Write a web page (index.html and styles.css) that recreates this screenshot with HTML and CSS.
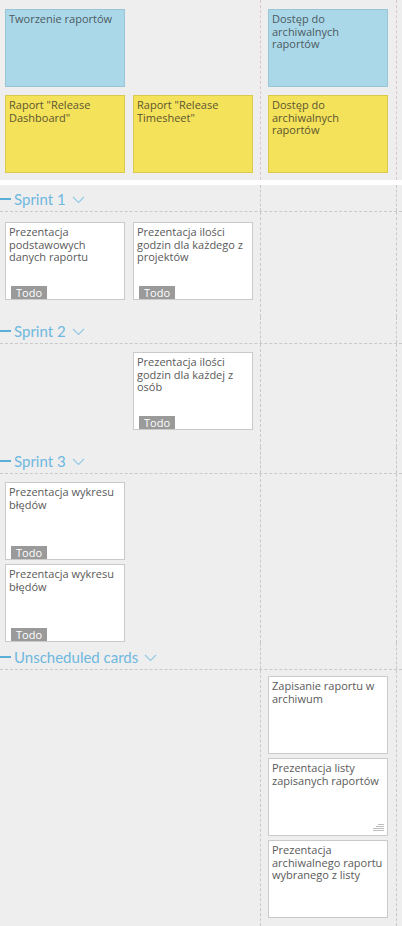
FILE: index.html
```html
<!DOCTYPE html>
<html lang="pl">

<head>
    <meta charset="UTF-8">
    <meta name="viewport" content="width=device-width, initial-scale=1.0">
    <title>Story map</title>
    <link rel="stylesheet" href="styles.css">
</head>

<body>
    <div class="board">
        <!-- activities / features -->
        <div class="lane lane-top">
            <div class="cell wide">
                <div class="cols">
                    <div class="card blue">Tworzenie raportów</div>
                    <div></div>
                    <div class="card yellow">Raport "Release Dashboard"</div>
                    <div class="card yellow">Raport "Release Timesheet"</div>
                </div>
            </div>
            <div class="cell narrow">
                <div class="stack wide-gap">
                    <div class="card blue">Dostęp do archiwalnych raportów</div>
                    <div class="card yellow">Dostęp do archiwalnych raportów</div>
                </div>
            </div>
            <div class="cell rest"></div>
        </div>

        <div class="band"></div>

        <!-- Sprint 1 -->
        <div class="lane lane-head">
            <div class="cell wide head">
                <span class="dash"></span>
                <span class="title">Sprint 1</span>
                <svg class="chev" width="13" height="8" viewBox="0 0 13 8"><polyline points="1,1 6.5,6.5 12,1" /></svg>
            </div>
            <div class="cell narrow"></div>
            <div class="cell rest"></div>
        </div>
        <div class="lane lane-body s1">
            <div class="cell wide">
                <div class="cols">
                    <div class="stack">
                        <div class="card">
                            <span>Prezentacja podstawowych danych raportu</span>
                            <span class="badge">Todo</span>
                        </div>
                    </div>
                    <div class="stack">
                        <div class="card">
                            <span>Prezentacja ilości godzin dla każdego z projektów</span>
                            <span class="badge">Todo</span>
                        </div>
                    </div>
                </div>
            </div>
            <div class="cell narrow"></div>
            <div class="cell rest"></div>
        </div>

        <!-- Sprint 2 -->
        <div class="lane lane-head">
            <div class="cell wide head">
                <span class="dash"></span>
                <span class="title">Sprint 2</span>
                <svg class="chev" width="13" height="8" viewBox="0 0 13 8"><polyline points="1,1 6.5,6.5 12,1" /></svg>
            </div>
            <div class="cell narrow"></div>
            <div class="cell rest"></div>
        </div>
        <div class="lane lane-body s2">
            <div class="cell wide">
                <div class="cols">
                    <div class="stack"></div>
                    <div class="stack">
                        <div class="card">
                            <span>Prezentacja ilości godzin dla każdej z osób</span>
                            <span class="badge">Todo</span>
                        </div>
                    </div>
                </div>
            </div>
            <div class="cell narrow"></div>
            <div class="cell rest"></div>
        </div>

        <!-- Sprint 3 -->
        <div class="lane lane-head">
            <div class="cell wide head">
                <span class="dash"></span>
                <span class="title">Sprint 3</span>
                <svg class="chev" width="13" height="8" viewBox="0 0 13 8"><polyline points="1,1 6.5,6.5 12,1" /></svg>
            </div>
            <div class="cell narrow"></div>
            <div class="cell rest"></div>
        </div>
        <div class="lane lane-body s3">
            <div class="cell wide">
                <div class="cols">
                    <div class="stack">
                        <div class="card">
                            <span>Prezentacja wykresu błędów</span>
                            <span class="badge">Todo</span>
                        </div>
                        <div class="card">
                            <span>Prezentacja wykresu błędów</span>
                            <span class="badge">Todo</span>
                        </div>
                    </div>
                    <div class="stack"></div>
                </div>
            </div>
            <div class="cell narrow"></div>
            <div class="cell rest"></div>
        </div>

        <!-- Unscheduled -->
        <div class="lane lane-head">
            <div class="cell wide head">
                <span class="dash"></span>
                <span class="title">Unscheduled cards</span>
                <svg class="chev" width="13" height="8" viewBox="0 0 13 8"><polyline points="1,1 6.5,6.5 12,1" /></svg>
            </div>
            <div class="cell narrow"></div>
            <div class="cell rest"></div>
        </div>
        <div class="lane lane-body s4">
            <div class="cell wide"></div>
            <div class="cell narrow">
                <div class="stack">
                    <div class="card">
                        <span>Zapisanie raportu w archiwum</span>
                    </div>
                    <div class="card">
                        <span>Prezentacja listy zapisanych raportów</span>
                        <svg class="desc" width="11" height="8" viewBox="0 0 11 8">
                            <line x1="5" y1="0.5" x2="11" y2="0.5" />
                            <line x1="3" y1="2.5" x2="11" y2="2.5" />
                            <line x1="0" y1="4.5" x2="11" y2="4.5" />
                            <line x1="0" y1="6.5" x2="11" y2="6.5" />
                        </svg>
                    </div>
                    <div class="card">
                        <span>Prezentacja archiwalnego raportu wybranego z listy</span>
                    </div>
                </div>
            </div>
            <div class="cell rest"></div>
        </div>
    </div>
</body>

</html>
```

FILE: styles.css
```css
* {
    box-sizing: border-box;
}

body {
    margin: 0;
    background-color: #eeeeee;
    font-family: "Open Sans", "Liberation Sans", sans-serif;
    color: #5a5a5a;
}

.board {
    width: 402px;
}

.lane {
    display: grid;
    grid-template-columns: 261px 136px 1fr;
}

.cell {
    min-width: 0;
}

.wide,
.narrow {
    border-right: 1px dashed #c9c9c9;
}

.lane-top .wide,
.lane-top .narrow {
    border-right-color: #dcc6cc;
}

.lane-top .cell {
    padding-top: 9px;
    padding-bottom: 7px;
}

.wide {
    padding-left: 5px;
}

.narrow {
    padding-left: 7px;
}

.cols {
    display: grid;
    grid-template-columns: 120px 120px;
    gap: 8px;
}

.stack {
    display: flex;
    flex-direction: column;
    gap: 4px;
    width: 120px;
}

.stack.wide-gap {
    gap: 8px;
}

.band {
    height: 5px;
    background-color: #fff;
}

/* lane headers */
.lane-head {
    height: 27px;
    border-bottom: 1px dashed #c9c9c9;
}

.head {
    display: flex;
    align-items: center;
    padding-left: 0;
    padding-top: 2px;
}

.dash {
    width: 11px;
    height: 2px;
    margin-right: 3px;
    background-color: #5aaed8;
}

.title {
    font-family: Lato, "Open Sans", sans-serif;
    font-size: 15px;
    color: #6fb8df;
}

.chev {
    margin-left: 6px;
    margin-top: 2px;
    fill: none;
    stroke: #92c9e6;
    stroke-width: 1.1;
}

/* lane bodies */
.lane-body .cell {
    padding-top: 8px;
}

.lane-body.s1 {
    min-height: 105px;
}

.lane-body.s1 .cell {
    padding-top: 10px;
}

.lane-body.s2 {
    min-height: 103px;
}

.lane-body.s3 {
    min-height: 169px;
}

.lane-body.s4 {
    min-height: 256px;
}

.lane-body.s4 .cell {
    padding-top: 6px;
}

/* cards */
.card {
    display: flex;
    flex-direction: column;
    width: 120px;
    height: 78px;
    padding: 3px 3px 0;
    background-color: #fff;
    border: 1px solid #cacaca;
    font-size: 11px;
    line-height: 12.6px;
    overflow: hidden;
}

.card.blue {
    background-color: #aad8e9;
    border-color: #98c6d8;
    color: #4d5a60;
}

.card.yellow {
    background-color: #f4e25a;
    border-color: #dcc84c;
    color: #5c5530;
}

.badge {
    align-self: flex-start;
    margin-top: auto;
    margin-left: 2px;
    padding: 0 5px;
    height: 13px;
    line-height: 13px;
    background-color: #9a9a9a;
    color: #fff;
    font-size: 11px;
}

.desc {
    align-self: flex-end;
    margin-top: auto;
    margin-bottom: 3px;
    stroke: #bdbdbd;
    stroke-width: 1;
}
```
